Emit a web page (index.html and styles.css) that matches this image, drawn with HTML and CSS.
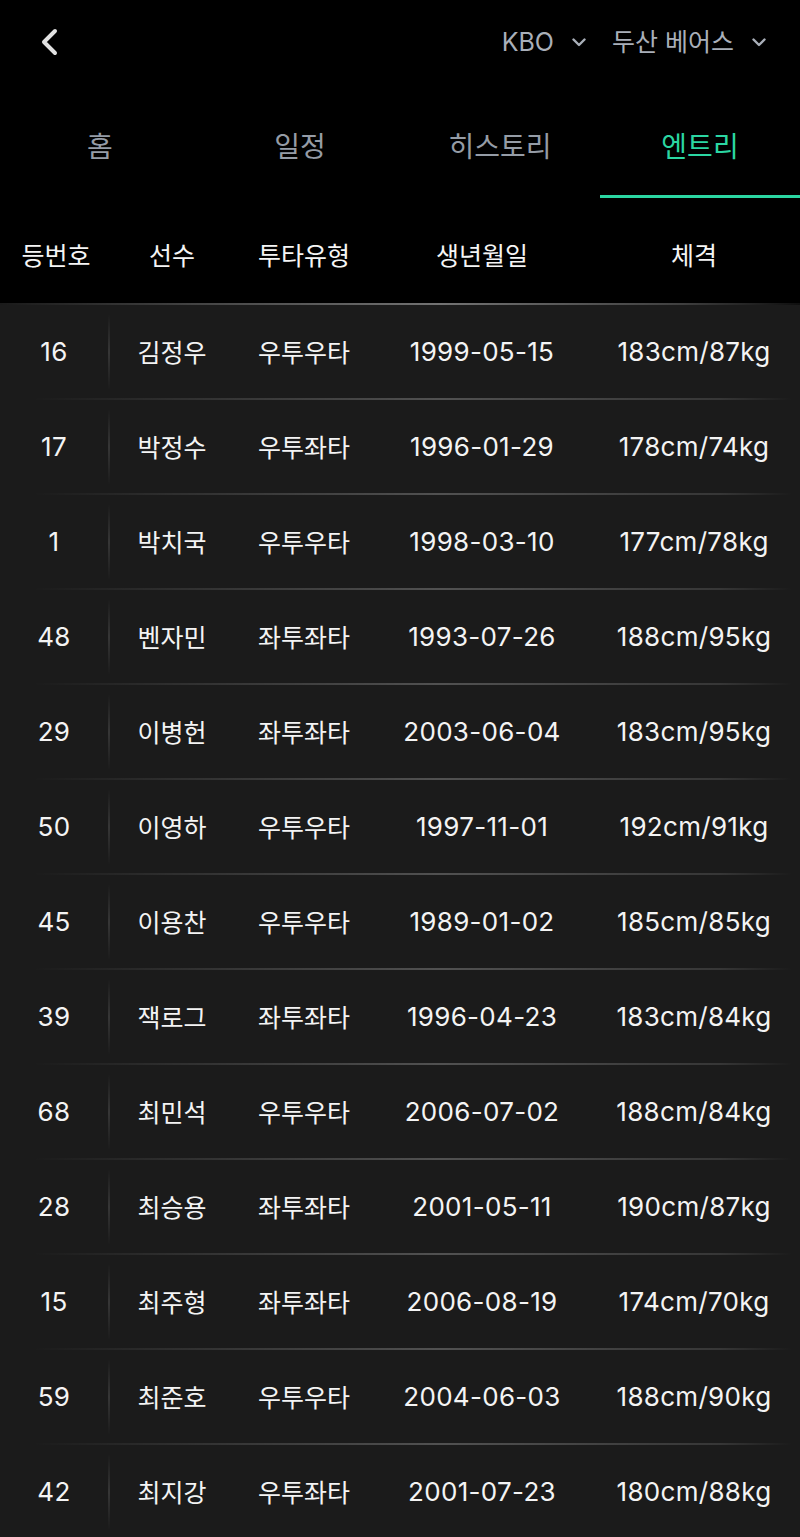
FILE: index.html
```html
<!DOCTYPE html>
<html lang="ko">
<head>
  <meta charset="UTF-8" />
  <title>엔트리</title>
  <link rel="stylesheet" href="styles.css">
</head>
<body>
  <div class="page">
    <div class="topbar">
      <svg class="back" width="24" height="32" viewBox="0 0 24 32">
        <path d="M17 5 L6 16 L17 27" fill="none" stroke="#e2e2e2" stroke-width="4" stroke-linecap="round" stroke-linejoin="round"/>
      </svg>
      <div class="selects">
        <div class="select">
          <span>KBO</span>
          <svg width="14" height="9" viewBox="0 0 14 9"><path d="M1.5 1.5 L7 7 L12.5 1.5" fill="none" stroke="#a9afb9" stroke-width="2.4" stroke-linecap="round" stroke-linejoin="round"/></svg>
        </div>
        <div class="select">
          <span>두산 베어스</span>
          <svg width="14" height="9" viewBox="0 0 14 9"><path d="M1.5 1.5 L7 7 L12.5 1.5" fill="none" stroke="#a9afb9" stroke-width="2.4" stroke-linecap="round" stroke-linejoin="round"/></svg>
        </div>
      </div>
    </div>

    <div class="tabs">
      <div class="tab">홈</div>
      <div class="tab">일정</div>
      <div class="tab">히스토리</div>
      <div class="tab active">엔트리</div>
    </div>

    <div class="grid head">
      <div>등번호</div>
      <div>선수</div>
      <div>투타유형</div>
      <div>생년월일</div>
      <div>체격</div>
    </div>

    <div class="list">
      <div class="grid row"><div class="no">16</div><div>김정우</div><div>우투우타</div><div class="num">1999-05-15</div><div class="num">183cm/87kg</div></div>
      <div class="grid row"><div class="no">17</div><div>박정수</div><div>우투좌타</div><div class="num">1996-01-29</div><div class="num">178cm/74kg</div></div>
      <div class="grid row"><div class="no">1</div><div>박치국</div><div>우투우타</div><div class="num">1998-03-10</div><div class="num">177cm/78kg</div></div>
      <div class="grid row"><div class="no">48</div><div>벤자민</div><div>좌투좌타</div><div class="num">1993-07-26</div><div class="num">188cm/95kg</div></div>
      <div class="grid row"><div class="no">29</div><div>이병헌</div><div>좌투좌타</div><div class="num">2003-06-04</div><div class="num">183cm/95kg</div></div>
      <div class="grid row"><div class="no">50</div><div>이영하</div><div>우투우타</div><div class="num">1997-11-01</div><div class="num">192cm/91kg</div></div>
      <div class="grid row"><div class="no">45</div><div>이용찬</div><div>우투우타</div><div class="num">1989-01-02</div><div class="num">185cm/85kg</div></div>
      <div class="grid row"><div class="no">39</div><div>잭로그</div><div>좌투좌타</div><div class="num">1996-04-23</div><div class="num">183cm/84kg</div></div>
      <div class="grid row"><div class="no">68</div><div>최민석</div><div>우투우타</div><div class="num">2006-07-02</div><div class="num">188cm/84kg</div></div>
      <div class="grid row"><div class="no">28</div><div>최승용</div><div>좌투좌타</div><div class="num">2001-05-11</div><div class="num">190cm/87kg</div></div>
      <div class="grid row"><div class="no">15</div><div>최주형</div><div>좌투좌타</div><div class="num">2006-08-19</div><div class="num">174cm/70kg</div></div>
      <div class="grid row"><div class="no">59</div><div>최준호</div><div>우투우타</div><div class="num">2004-06-03</div><div class="num">188cm/90kg</div></div>
      <div class="grid row"><div class="no">42</div><div>최지강</div><div>우투좌타</div><div class="num">2001-07-23</div><div class="num">180cm/88kg</div></div>
    </div>
  </div>
</body>
</html>
```

FILE: styles.css
```css
body {
  margin: 0;
  background: #1b1b1b;
  font-family: Inter, "Noto Sans CJK KR", sans-serif;
  color: #f2f2f2;
}
.page {
  width: 800px;
  height: 1537px;
  overflow: hidden;
  background: #1b1b1b;
}
.topbar {
  height: 84px;
  background: #000;
  display: flex;
  align-items: center;
  justify-content: space-between;
  padding: 0 34px 0 38px;
}
.back {
  display: block;
}
.selects {
  display: flex;
  gap: 26px;
}
.select {
  display: flex;
  align-items: center;
  gap: 18px;
  color: #a9afb9;
  font-size: 25px;
  line-height: 30px;
}
.select svg {
  display: block;
  margin-top: 1px;
}
.tabs {
  display: flex;
  background: #000;
  height: 114px;
}
.tab {
  flex: 1;
  box-sizing: border-box;
  height: 114px;
  padding-top: 46px;
  line-height: 34px;
  text-align: center;
  font-size: 28px;
  color: #959ca6;
}
.tab.active {
  color: #2bd6a2;
  border-bottom: 3px solid #2bd6a2;
}
.grid {
  display: grid;
  grid-template-columns: 112px 120px 144px 212px 212px;
}
.grid > div {
  text-align: center;
}
.head {
  background-color: #000;
  height: 107px;
  box-sizing: border-box;
  padding-top: 44px;
  line-height: 28px;
  font-size: 25px;
  color: #f5f5f5;
  background-image: linear-gradient(to right, rgba(255,255,255,0.1), rgba(255,255,255,0.3) 30%, rgba(255,255,255,0.45) 55%, rgba(255,255,255,0.25) 85%, rgba(255,255,255,0.06));
  background-size: 100% 2px;
  background-position: bottom;
  background-repeat: no-repeat;
}
.list {
  background: #1b1b1b;
}
.row {
  height: 95px;
  align-items: center;
  font-size: 25px;
  line-height: 30px;
  color: #f4f4f4;
  background-image: linear-gradient(to right, rgba(255,255,255,0) 4%, rgba(255,255,255,0.08) 20%, rgba(255,255,255,0.24) 55%, rgba(255,255,255,0.12) 90%, rgba(255,255,255,0) 99%);
  background-size: 100% 2px;
  background-position: bottom;
  background-repeat: no-repeat;
}
.row .num,
.row .no {
  font-size: 26px;
  letter-spacing: 0.3px;
  margin-top: -2px;
}
.row .no {
  height: 74px;
  line-height: 74px;
  margin-right: 2px;
  border-right: 2px solid transparent;
  border-image: linear-gradient(to bottom, rgba(255,255,255,0), rgba(255,255,255,0.12) 50%, rgba(255,255,255,0)) 1;
}
```
